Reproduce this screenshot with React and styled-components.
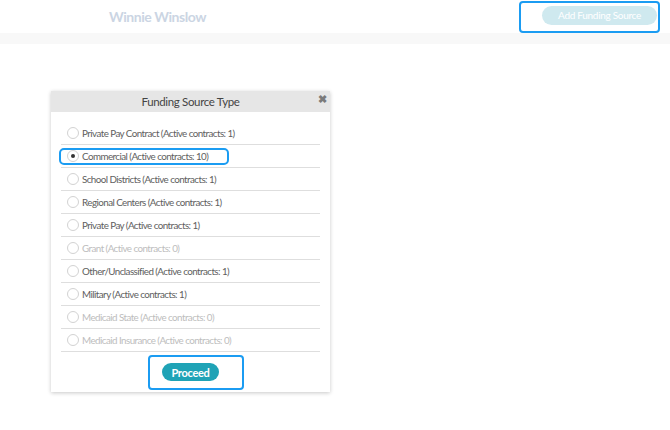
import React, { useState } from 'react';
import styled, { createGlobalStyle } from 'styled-components';

const teal = '#1fa3b6';
const paleTeal = '#cfe9ef';
const markBlue = '#1b9cf2';
const lineColor = '#dedede';

const GlobalStyle = createGlobalStyle`
  html, body {
    margin: 0;
    padding: 0;
    background: #ffffff;
    font-family: Lato, "Open Sans", "Liberation Sans", sans-serif;
  }
`;

const Page = styled.div`
  width: 670px;
  height: 430px;
  overflow: hidden;
  background: #ffffff;
`;

const TopBar = styled.header`
  height: 33px;
  display: flex;
  align-items: center;
  justify-content: space-between;
  padding: 0 10px 0 109px;
  box-sizing: border-box;
`;

const ClientName = styled.h1`
  margin: 0;
  font-size: 14px;
  font-weight: 700;
  letter-spacing: -0.45px;
  color: #cbd5e3;
`;

const MarkBox = styled.div`
  display: flex;
  border: 2px solid ${markBlue};
  border-radius: 4px;
  padding: ${({ $pad }) => $pad};
`;

const PillButton = styled.button`
  border: none;
  border-radius: 10px;
  font-family: inherit;
  color: #ffffff;
  cursor: pointer;
  background: ${({ $pale }) => ($pale ? paleTeal : teal)};
  font-size: ${({ $pale }) => ($pale ? '10px' : '11px')};
  letter-spacing: -0.3px;
  font-weight: ${({ $pale }) => ($pale ? 400 : 700)};
  width: ${({ $w }) => $w};
  height: ${({ $h }) => $h};
  padding: 0;
`;

const Band = styled.div`
  height: 11px;
  background: #f8f8f8;
`;

const Content = styled.main`
  padding: 47px 0 0 51px;
`;

const Modal = styled.section`
  width: 279px;
  background: #ffffff;
  box-shadow: 0 1px 4px rgba(0, 0, 0, 0.22);
`;

const ModalHeader = styled.div`
  position: relative;
  height: 21px;
  background: #e6e6e6;
  display: flex;
  align-items: center;
  justify-content: center;
`;

const ModalTitle = styled.h2`
  margin: 0;
  font-size: 11.5px;
  letter-spacing: -0.35px;
  font-weight: 400;
  color: #444444;
`;

const CloseButton = styled.button`
  position: absolute;
  top: 3px;
  right: 3px;
  border: none;
  background: none;
  padding: 0;
  font-size: 11px;
  line-height: 1;
  font-weight: 700;
  color: #7a7a7a;
  cursor: pointer;
`;

const OptionList = styled.ul`
  list-style: none;
  margin: 0;
  padding: 10px 10px 0;
`;

const OptionRow = styled.li`
  height: 23px;
  display: flex;
  align-items: center;
  border-bottom: 1px solid ${lineColor};
  box-sizing: border-box;
`;

const OptionLabel = styled.label`
  display: inline-flex;
  align-items: center;
  gap: 3px;
  height: 13px;
  padding: 0 19px 0 6px;
  font-size: 9.8px;
  letter-spacing: -0.55px;
  color: ${({ $disabled }) => ($disabled ? '#bdbdbd' : '#5e5e5e')};
  cursor: ${({ $disabled }) => ($disabled ? 'default' : 'pointer')};
  border-radius: 3px;
  outline: ${({ $marked }) => ($marked ? `2px solid ${markBlue}` : 'none')};
`;

const Radio = styled.span`
  width: 10px;
  height: 10px;
  border-radius: 50%;
  border: 1px solid #d2d2d2;
  background: #ffffff;
  display: flex;
  align-items: center;
  justify-content: center;
  flex-shrink: 0;

  &::after {
    content: '';
    width: 4px;
    height: 4px;
    border-radius: 50%;
    background: ${({ $checked }) => ($checked ? '#333333' : 'transparent')};
  }
`;

const Footer = styled.div`
  display: flex;
  padding: 3px 0 2px 97px;
`;

const options = [
  { name: 'Private Pay Contract', count: 1 },
  { name: 'Commercial', count: 10 },
  { name: 'School Districts', count: 1 },
  { name: 'Regional Centers', count: 1 },
  { name: 'Private Pay', count: 1 },
  { name: 'Grant', count: 0 },
  { name: 'Other/Unclassified', count: 1 },
  { name: 'Military', count: 1 },
  { name: 'Medicaid State', count: 0 },
  { name: 'Medicaid Insurance', count: 0 },
];

export default function App() {
  const [selected, setSelected] = useState('Commercial');

  return (
    <Page>
      <GlobalStyle />
      <TopBar>
        <ClientName>Winnie Winslow</ClientName>
        <MarkBox $pad="3px 1px 6px 21px">
          <PillButton $pale $w="115px" $h="19px">Add Funding Source</PillButton>
        </MarkBox>
      </TopBar>
      <Band />
      <Content>
        <Modal>
          <ModalHeader>
            <ModalTitle>Funding Source Type</ModalTitle>
            <CloseButton aria-label="Close">✖</CloseButton>
          </ModalHeader>
          <OptionList>
            {options.map((opt) => {
              const disabled = opt.count === 0;
              return (
                <OptionRow key={opt.name}>
                  <OptionLabel
                    $disabled={disabled}
                    $marked={opt.name === 'Commercial'}
                    onClick={() => !disabled && setSelected(opt.name)}
                  >
                    <Radio $checked={selected === opt.name} />
                    {opt.name} (Active contracts: {opt.count})
                  </OptionLabel>
                </OptionRow>
              );
            })}
          </OptionList>
          <Footer>
            <MarkBox $pad="6px 23px 7px 12px">
              <PillButton $w="57px" $h="18px">Proceed</PillButton>
            </MarkBox>
          </Footer>
        </Modal>
      </Content>
    </Page>
  );
}
